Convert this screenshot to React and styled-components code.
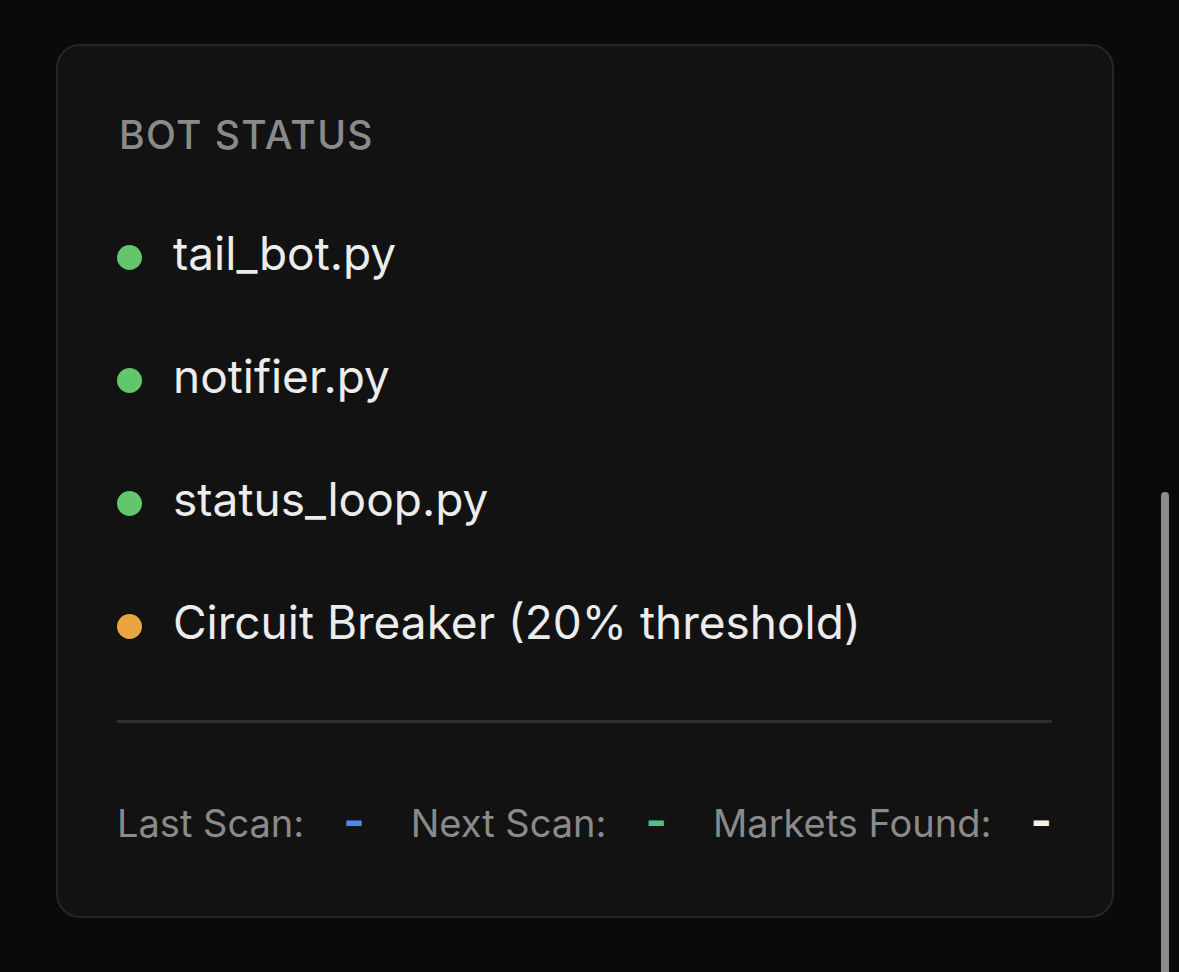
import React from "react";
import styled, { createGlobalStyle } from "styled-components";

const GlobalStyle = createGlobalStyle`
  html, body {
    margin: 0;
    padding: 0;
    background: #0a0a0a;
    font-family: Inter, "Noto Sans", sans-serif;
    -webkit-font-smoothing: antialiased;
  }
`;

const Page = styled.div`
  position: relative;
  height: 972px;
  overflow: hidden;
  padding: 44px 65px 0 56px;
  box-sizing: border-box;
`;

const Card = styled.section`
  background: #121212;
  border: 2px solid #262626;
  border-radius: 24px;
  padding: 65px 60px 62px 59px;
  height: 874px;
  box-sizing: border-box;
  display: flex;
  flex-direction: column;
`;

const Title = styled.h2`
  margin: 0 0 0 2px;
  font-size: 39px;
  font-weight: 500;
  letter-spacing: 0.035em;
  color: #8a8a8a;
  line-height: 48px;
`;

const List = styled.ul`
  list-style: none;
  margin: 65px 0 0;
  padding: 0;
  display: flex;
  flex-direction: column;
  gap: 65px;
`;

const Item = styled.li`
  display: flex;
  align-items: center;
  gap: 31px;
  font-size: 46px;
  line-height: 58px;
  color: #ececec;
`;

const Dot = styled.span`
  width: 25px;
  height: 25px;
  border-radius: 50%;
  flex: none;
  margin-top: 8px;
  background: ${(p) => (p.$warn ? "#eba540" : "#62c76c")};
`;

const Divider = styled.div`
  height: 3px;
  background: #2e2e2e;
  margin: 69px 0 0;
`;

const Footer = styled.div`
  display: flex;
  align-items: baseline;
  gap: 46px;
  margin-top: 73px;
  font-size: 38px;
  line-height: 48px;
  white-space: nowrap;
`;

const Stat = styled.div`
  display: flex;
  align-items: baseline;
  gap: 39px;
`;

const Label = styled.span`
  color: #8a8a8a;
`;

const Value = styled.span`
  color: ${(p) => p.$color};
  font-size: 46px;
  font-weight: 700;
`;

const Scrollbar = styled.div`
  position: absolute;
  left: 1161px;
  top: 492px;
  width: 8px;
  height: 500px;
  border-radius: 4px;
  background: #8c8c8c;
`;

const bots = [
  { name: "tail_bot.py" },
  { name: "notifier.py" },
  { name: "status_loop.py" },
  { name: "Circuit Breaker (20% threshold)", warn: true },
];

const stats = [
  { label: "Last Scan:", color: "#4f87f2" },
  { label: "Next Scan:", color: "#4fbf8a" },
  { label: "Markets Found:", color: "#f0f0f0" },
];

export default function App() {
  return (
    <Page>
      <GlobalStyle />
      <Card>
        <Title>BOT STATUS</Title>
        <List>
          {bots.map((b) => (
            <Item key={b.name}>
              <Dot $warn={b.warn} />
              {b.name}
            </Item>
          ))}
        </List>
        <Divider />
        <Footer>
          {stats.map((s) => (
            <Stat key={s.label}>
              <Label>{s.label}</Label>
              <Value $color={s.color}>-</Value>
            </Stat>
          ))}
        </Footer>
      </Card>
      <Scrollbar />
    </Page>
  );
}
